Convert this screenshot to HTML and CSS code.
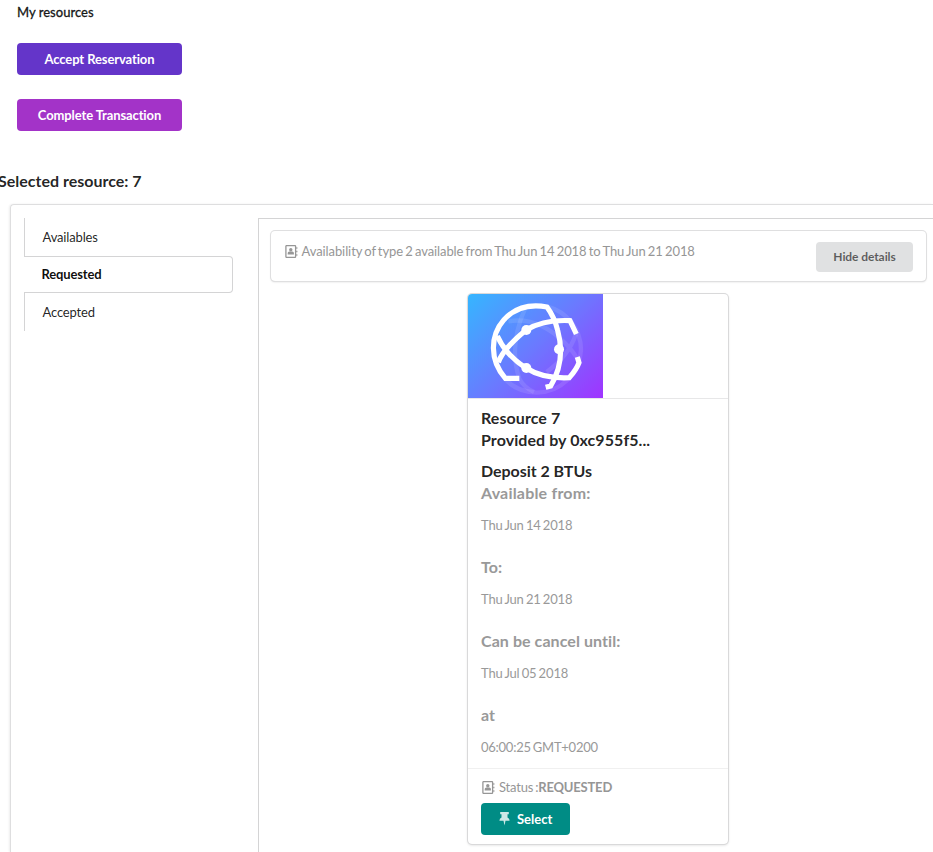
FILE: index.html
```html
<!DOCTYPE html>
<html lang="en">
<head>
<meta charset="utf-8">
<title>My resources</title>
<link rel="stylesheet" href="styles.css">
</head>
<body>
<svg class="defs" aria-hidden="true">
  <symbol id="contact" viewBox="0 0 13 13">
    <path d="M1.6.6h8.3q.7 0 .7.7v10.4q0 .7-.7.7H1.6q-.7 0-.7-.7V1.300q0-.7.7-.7z" fill="none" stroke="currentColor" stroke-width="1.3"/>
    <circle cx="5.8" cy="4.700" r="1.700" fill="currentColor"/>
    <path d="M2.700 9.500V8q0-1.600 1.600-1.600h3Q8.900 6.400 8.900 8v1.500z" fill="currentColor"/>
    <path d="M11.200 2.200h1.200v1.600h-1.200zM11.200 5.700h1.200v1.600h-1.200zM11.200 9.200h1.200v1.600h-1.200z" fill="currentColor"/>
  </symbol>
</svg>
<header class="top">
  <h1 class="title">My resources</h1>
  <button class="btn violet">Accept Reservation</button>
  <button class="btn purple">Complete Transaction</button>
</header>
<h2 class="selected">Selected resource: 7</h2>
<main class="segment">
  <nav class="tabs">
    <a class="tab">Availables</a>
    <a class="tab active">Requested</a>
    <a class="tab">Accepted</a>
  </nav>
  <section class="pane">
    <div class="summary">
      <div class="availability"><svg class="contact"><use href="#contact"/></svg><span>Availability of type 2 available from Thu Jun 14 2018 to Thu Jun 21 2018</span></div>
      <button class="hide">Hide details</button>
    </div>
    <article class="card">
      <div class="image">
        <svg class="logo" viewBox="24 18 405 312">
          <defs><linearGradient id="bg" gradientUnits="userSpaceOnUse" x1="47" y1="-5" x2="406" y2="353">
            <stop offset="0" stop-color="#35b6ff"/><stop offset=".5" stop-color="#6b79ff"/><stop offset="1" stop-color="#a033ff"/>
          </linearGradient></defs>
          <rect x="24" y="18" width="405" height="312" fill="url(#bg)"/>
          <g fill="none" stroke="#fff" stroke-opacity=".1" stroke-width="13">
            <path d="M262 56A134 134 0 0 1 363 185A134 134 0 0 1 230 314Q165 310 135 272"/>
            <path d="M195 62Q145 175 178 272Q192 298 222 312"/>
            <path d="M145 100Q235 85 315 165Q345 195 358 225M348 138Q325 205 260 252"/>
          </g>
          <g fill="none" stroke="#fff" stroke-width="15.5">
            <path d="M178 271H136C88 216 90 143 132 95C166 58 211 48 261 57Q283 87 293 127Q318 218 272 294L257 298"/>
            <path d="M115 223Q129 183 198 126Q252 94 330 98L349 138"/>
            <path d="M112 144Q137 201 198 240Q250 273 328 269Q350 244 357 224L352 207"/>
          </g>
          <g fill="#fff"><circle cx="199" cy="126" r="15"/><circle cx="297" cy="184" r="15"/><circle cx="199" cy="240" r="15"/></g>
        </svg>
      </div>
      <div class="details">
        <h3 class="strong">Resource 7</h3>
        <h3 class="strong">Provided by 0xc955f5...</h3>
        <h3 class="strong deposit">Deposit 2 BTUs</h3>
        <h4 class="label from">Available from:</h4>
        <p class="date">Thu Jun 14 2018</p>
        <h4 class="label">To:</h4>
        <p class="date">Thu Jun 21 2018</p>
        <h4 class="label">Can be cancel until:</h4>
        <p class="date">Thu Jul 05 2018</p>
        <h4 class="label">at</h4>
        <p class="date">06:00:25 GMT+0200</p>
      </div>
      <footer class="extra">
        <div class="status"><svg class="contact"><use href="#contact"/></svg><span>Status :<b>REQUESTED</b></span></div>
        <button class="select"><svg class="pin" viewBox="0 0 11 14"><path d="M1.200 0h8.600v2.200H8.500v3.300Q10.600 6.400 10.600 8.800H6.500L5.500 13.500 4.500 8.800H.4Q.4 6.400 2.500 5.500V2.200H1.200z" fill="currentColor"/></svg><span>Select</span></button>
      </footer>
    </article>
  </section>
</main>
</body>
</html>
```
FILE: styles.css
```css
* { box-sizing: border-box; }
html, body { margin: 0; height: 100vh; overflow: hidden; }
body {
  background: #fff;
  color: rgba(0, 0, 0, .87);
  font: 14px/20px Lato, "Liberation Sans", sans-serif;
  display: flex;
  flex-direction: column;
}
h1, h2, h3, h4, p { margin: 0; white-space: nowrap; }
button { border: 0; padding: 0; font: inherit; border-radius: 4px; white-space: nowrap; }
span { white-space: nowrap; }
.defs { width: 0; height: 0; position: absolute; }

.top { display: flex; flex-direction: column; align-items: flex-start; padding: 2px 17px 0; flex: none; }
.title { font-size: 13px; font-weight: 500; line-height: 20px; margin-bottom: 21px; -webkit-text-stroke: .3px currentColor; }
.btn { width: 165px; height: 32px; color: #fff; font-size: 13px; font-weight: 700; letter-spacing: -.11px; margin-bottom: 24px; }
.violet { background: #6435c9; }
.purple { background: #a333c8; }
.selected { font-size: 16px; font-weight: 700; line-height: 20px; margin: 16px 0 13px -2px; flex: none; }

.segment {
  flex: 1;
  min-height: 0;
  margin-left: 10px;
  padding: 13px 0 0 13px;
  display: flex;
  align-items: stretch;
  border: 1px solid #dededf;
  border-width: 1px 0 0 1px;
  border-radius: 4px 0 0 0;
  box-shadow: -1px 0 2px rgba(34, 36, 38, .08);
}
.tabs { width: 209px; flex: none; margin-right: 25px; display: flex; flex-direction: column; }
.tab { height: 38px; padding-left: 17.5px; line-height: 38px; font-size: 13px; letter-spacing: -.15px; border-left: 1px solid #d4d4d5; }
.tab.active {
  height: 37px;
  line-height: 35px;
  padding-left: 17.5px;
  color: rgba(0, 0, 0, .95);
  font-weight: 700;
  border: 1px solid #d4d4d5;
  border-left: 0;
  border-radius: 0 4px 4px 0;
}
.pane {
  flex: 1;
  min-width: 0;
  border: 1px solid #d4d4d5;
  border-width: 1px 0 0 1px;
  padding: 12px 0 0 12px;
}
.summary {
  width: 655px;
  height: 50px;
  padding: 11px 13px 0 14px;
  display: flex;
  justify-content: space-between;
  align-items: flex-start;
  border-radius: 4px;
  box-shadow: 0 0 0 1px #dfdfe0, 0 1px 2px #d4d4d5;
}
.availability, .status { display: flex; align-items: center; height: 20px; color: #969696; font-size: 13px; }
.availability { margin-top: -1px; letter-spacing: -.09px; word-spacing: -1px; }
.contact { width: 13px; height: 13px; margin-right: 3.5px; flex: none; }
.hide { width: 97px; height: 30px; background: #e0e1e2; color: rgba(0, 0, 0, .6); font-size: 12px; font-weight: 700; letter-spacing: -.08px; }

.card {
  width: 260px;
  height: 550px;
  margin: 13px 0 0 197px;
  border-radius: 4px;
  overflow: hidden;
  box-shadow: 0 0 0 1px #d9d9da, 0 1px 3px #d4d4d5;
}
.image { height: 104px; }
.logo { width: 135px; height: 104px; display: block; }
.details { height: 370px; border-top: 1px solid #e7e7e8; padding: 8px 13px 0; }
.strong, .label { font-size: 16px; font-weight: 700; line-height: 22px; letter-spacing: .07px; }
.strong.deposit { margin-top: 9px; letter-spacing: -.05px; }
.label.from { letter-spacing: .2px; }
.label, .date { color: #999; }
.date { font-size: 13px; line-height: 20px; margin: 11px 0 21px; letter-spacing: -.16px; word-spacing: -1px; }
.date:last-child { letter-spacing: -.25px; }
.extra { border-top: 1px solid #f0f0f0; padding: 8px 13px 0; }
.status { letter-spacing: -.2px; word-spacing: -1px; }
.status .contact { margin: 0 4px 0 1px; }
.select {
  width: 89px;
  height: 32px;
  margin-top: 6px;
  display: flex;
  align-items: center;
  padding-left: 18px;
  background: #008c85;
  color: #fff;
  font-size: 13px;
  font-weight: 700;
}
.pin { width: 11px; height: 14px; margin-right: 7px; opacity: .8; }
```
